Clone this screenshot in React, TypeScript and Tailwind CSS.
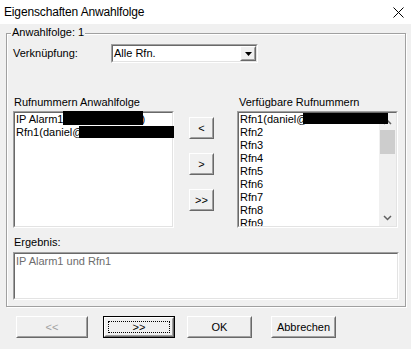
import React from "react";

function Sunken({ className = "", innerClassName = "", children }: { className?: string; innerClassName?: string; children?: React.ReactNode }) {
  return (
    <div className={`border border-t-[#a0a0a0] border-l-[#a0a0a0] border-b-white border-r-white ${className}`}>
      <div className={`w-full h-full border border-t-[#696969] border-l-[#696969] border-b-[#e3e3e3] border-r-[#e3e3e3] bg-white ${innerClassName}`}>
        {children}
      </div>
    </div>
  );
}

function Btn({ className = "", children, isDefault = false, disabled = false }: { className?: string; children?: React.ReactNode; isDefault?: boolean; disabled?: boolean }) {
  const core = (
    <div className="w-full h-full border border-t-white border-l-white border-b-[#696969] border-r-[#696969]">
      <div className="relative w-full h-full border border-t-[#f0f0f0] border-l-[#f0f0f0] border-b-[#a0a0a0] border-r-[#a0a0a0] bg-[#f0f0f0] flex items-center justify-center">
        <span className={disabled ? "text-[#a0a0a0]" : "text-black"}>{children}</span>
        {isDefault && <div className="absolute inset-[2px] border border-dotted border-black" />}
      </div>
    </div>
  );
  if (isDefault) {
    return <div className={`border border-black ${className}`}>{core}</div>;
  }
  return <div className={className}>{core}</div>;
}

function Chevron({ up = false }: { up?: boolean }) {
  return (
    <svg width="9" height="6" viewBox="0 0 9 6">
      <path d={up ? "M1 5 L4.5 1.5 L8 5" : "M1 1 L4.5 4.5 L8 1"} fill="none" stroke="#606060" strokeWidth="1.5" />
    </svg>
  );
}

export default function App() {
  const rightItems = ["Rfn2", "Rfn3", "Rfn4", "Rfn5", "Rfn6", "Rfn7", "Rfn8", "Rfn9"];
  return (
    <div className="w-[411px] h-[349px] bg-[#f0f0f0] font-['Liberation_Sans',Arial,sans-serif] text-[11px] leading-[13px] text-black overflow-hidden">
      <div className="h-[24px] bg-white flex items-center justify-between pl-[4px] pr-[7px]">
        <span className="text-[12px] tracking-[-0.15px]">Eigenschaften Anwahlfolge</span>
        <svg width="11" height="11" viewBox="0 0 11 11">
          <path d="M0.5 0.5 L10.5 10.5 M10.5 0.5 L0.5 10.5" stroke="#000" strokeWidth="1" />
        </svg>
      </div>

      <div className="relative ml-[6px] mt-[9px] w-[400px] h-[274px] border border-[#a0a0a0] shadow-[inset_1px_1px_0_#fff,1px_1px_0_#fff] flex flex-col pl-[6px]">
        <span className="absolute left-[4px] top-[-8px] bg-[#f0f0f0] px-[1px]">Anwahlfolge: 1</span>

        <div className="mt-[10px] h-[19px] flex items-center">
          <span className="w-[98px]">Verknüpfung:</span>
          <Sunken className="w-[147px] h-[19px]" innerClassName="flex items-stretch">
            <span className="flex-1 pl-[1px] flex items-center">Alle Rfn.</span>
            <Btn className="w-[16px]">
              <svg width="7" height="4" viewBox="0 0 7 4" className="block">
                <path d="M0 0 H7 L3.5 4 Z" fill="#000" />
              </svg>
            </Btn>
          </Sunken>
        </div>

        <div className="mt-[33px] flex h-[13px]">
          <span className="ml-[1px] w-[225px]">Rufnummern Anwahlfolge</span>
          <span>Verfügbare Rufnummern</span>
        </div>

        <div className="mt-[2px] flex items-start">
          <div className="relative">
            <Sunken className="w-[161px] h-[117px]">
              <div className="pl-[1px]">
                <div className="whitespace-nowrap">IP Alarm1<span className="inline-block w-[78px]" />)</div>
                <div className="whitespace-nowrap">Rfn1(daniel@</div>
              </div>
            </Sunken>
            <div className="absolute left-[50px] top-0 w-[80px] h-[14px] bg-black" />
            <div className="absolute left-[66px] top-[15px] w-[95px] h-[12px] bg-black" />
          </div>

          <div className="ml-[15px] mt-[6px] flex flex-col gap-[14px]">
            <Btn className="w-[25px] h-[22px]">&lt;</Btn>
            <Btn className="w-[25px] h-[22px]">&gt;</Btn>
            <Btn className="w-[25px] h-[22px]">&gt;&gt;</Btn>
          </div>

          <div className="relative ml-[23px]">
            <Sunken className="w-[161px] h-[117px]" innerClassName="flex overflow-hidden">
              <div className="flex-1 pl-[1px] overflow-hidden">
                <div className="whitespace-nowrap">Rfn1(daniel@</div>
                {rightItems.map((t) => (
                  <div key={t}>{t}</div>
                ))}
              </div>
              <div className="w-[17px] h-full bg-[#f0f0f0] flex flex-col items-center">
                <div className="h-[17px] flex items-center justify-center">
                  <Chevron up />
                </div>
                <div className="w-[15px] h-[24px] bg-[#cdcdcd]" />
                <div className="flex-1" />
                <div className="h-[17px] flex items-center justify-center">
                  <Chevron />
                </div>
              </div>
            </Sunken>
            <div className="absolute left-[66px] top-[2px] w-[85px] h-[11px] bg-black" />
          </div>
        </div>

        <span className="mt-[8px] ml-[1px]">Ergebnis:</span>

        <Sunken className="mt-[3px] w-[386px] h-[48px]">
          <div className="pl-[1px] pt-[1px] text-[#6d6d6d]">IP Alarm1 und Rfn1</div>
        </Sunken>
      </div>

      <div className="mt-[9px] ml-[16px] flex">
        <Btn className="w-[72px] h-[22px]" disabled>
          &lt;&lt;
        </Btn>
        <Btn className="ml-[15px] w-[72px] h-[22px]" isDefault>
          &gt;&gt;
        </Btn>
        <Btn className="ml-[12px] w-[65px] h-[22px]">OK</Btn>
        <Btn className="ml-[19px] w-[65px] h-[22px]">Abbrechen</Btn>
      </div>
    </div>
  );
}
